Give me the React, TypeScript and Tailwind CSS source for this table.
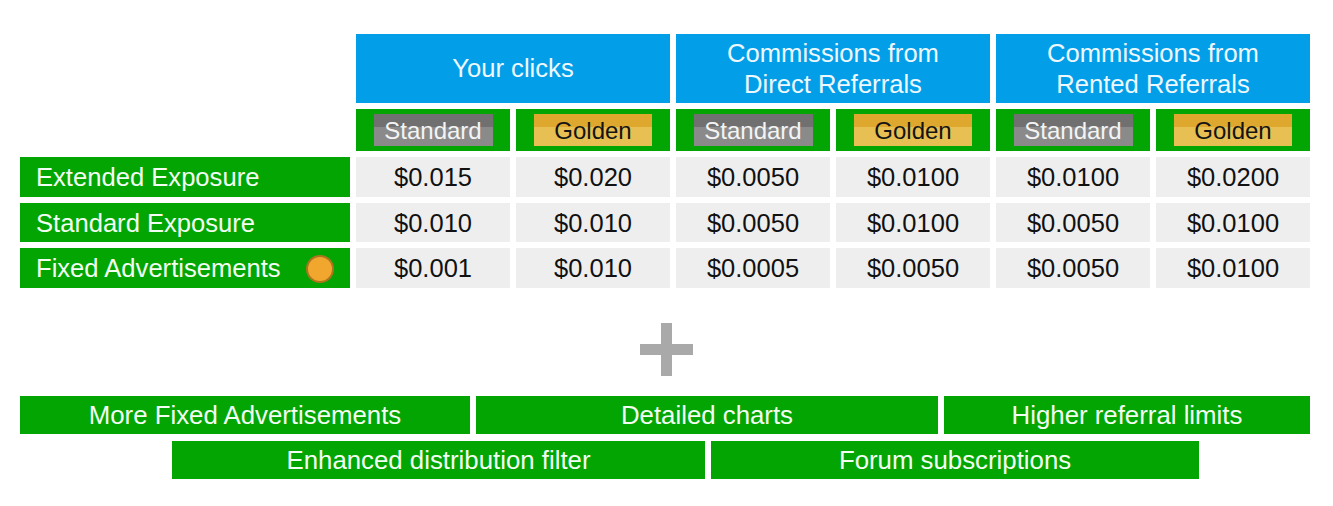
import React from 'react';

const font = { fontFamily: '"Liberation Sans", Arial, sans-serif' };

const headers = [
  ['Your clicks'],
  ['Commissions from', 'Direct Referrals'],
  ['Commissions from', 'Rented Referrals'],
];

const rows = [
  { label: 'Extended Exposure', values: ['$0.015', '$0.020', '$0.0050', '$0.0100', '$0.0100', '$0.0200'] },
  { label: 'Standard Exposure', values: ['$0.010', '$0.010', '$0.0050', '$0.0100', '$0.0050', '$0.0100'] },
  { label: 'Fixed Advertisements', values: ['$0.001', '$0.010', '$0.0005', '$0.0050', '$0.0050', '$0.0100'], dot: true },
];

const Badge: React.FC<{ golden?: boolean }> = ({ golden }) =>
  golden ? (
    <span className="flex h-[32px] w-[118px] items-center justify-center bg-[linear-gradient(to_bottom,#dea82f_42%,#e7bf53_42%)] pt-[1px] text-[24px] leading-none text-[#141414]">
      Golden
    </span>
  ) : (
    <span className="flex h-[32px] w-[119px] items-center justify-center bg-[linear-gradient(to_bottom,#707070_42%,#8a8a8a_42%)] pt-[1px] text-[24px] leading-none text-[#f4f4f4]">
      Standard
    </span>
  );

export default function App() {
  return (
    <div className="h-[506px] w-[1333px] bg-white pl-[20px] pt-[34px]" style={font}>
      {/* rate table */}
      <div className="grid grid-cols-[330px_repeat(6,154px)] grid-rows-[69px_42px_40px_39px_40px] gap-x-[6px] gap-y-[6px]">
        <div />
        {headers.map((lines, i) => (
          <div
            key={i}
            className="col-span-2 flex flex-col items-center justify-center bg-[#029fe8] text-[25.6px] leading-[31px] text-[#eef8ff]"
          >
            {lines.map((l) => (
              <span key={l}>{l}</span>
            ))}
          </div>
        ))}

        <div />
        {[0, 1, 2, 3, 4, 5].map((i) => (
          <div key={i} className="flex items-center justify-center bg-[#03a503]">
            <Badge golden={i % 2 === 1} />
          </div>
        ))}

        {rows.map((row) => (
          <React.Fragment key={row.label}>
            <div className="flex items-center justify-between bg-[#03a503] pl-[16px] pr-[16px] pt-[1px] text-[25.6px] text-[#f2fff2]">
              <span>{row.label}</span>
              {row.dot && <span className="h-[28px] w-[28px] rounded-full border-2 border-[#ad741f] bg-[#f1a72d]" />}
            </div>
            {row.values.map((v, j) => (
              <div key={j} className="flex items-center justify-center bg-[#eeeeee] pt-[1px] text-[25.5px] text-[#111111]">
                {v}
              </div>
            ))}
          </React.Fragment>
        ))}
      </div>

      {/* plus */}
      <div className="mt-[35px] flex w-[1293px] justify-center">
        <svg width="53" height="53" viewBox="0 0 53 53">
          <rect x="21" y="0" width="11" height="53" fill="#a9a9a9" />
          <rect x="0" y="21" width="53" height="11" fill="#a9a9a9" />
        </svg>
      </div>

      {/* extras */}
      <div className="mt-[20px] flex flex-col gap-[7px] text-[25.8px] text-[#f2fff2]">
        <div className="flex gap-[6px]">
          <div className="flex h-[38px] w-[450px] items-center justify-center bg-[#03a503]">More Fixed Advertisements</div>
          <div className="flex h-[38px] w-[462px] items-center justify-center bg-[#03a503]">Detailed charts</div>
          <div className="flex h-[38px] w-[366px] items-center justify-center bg-[#03a503]">Higher referral limits</div>
        </div>
        <div className="ml-[152px] flex gap-[6px]">
          <div className="flex h-[38px] w-[533px] items-center justify-center bg-[#03a503]">Enhanced distribution filter</div>
          <div className="flex h-[38px] w-[488px] items-center justify-center bg-[#03a503]">Forum subscriptions</div>
        </div>
      </div>
    </div>
  );
}
